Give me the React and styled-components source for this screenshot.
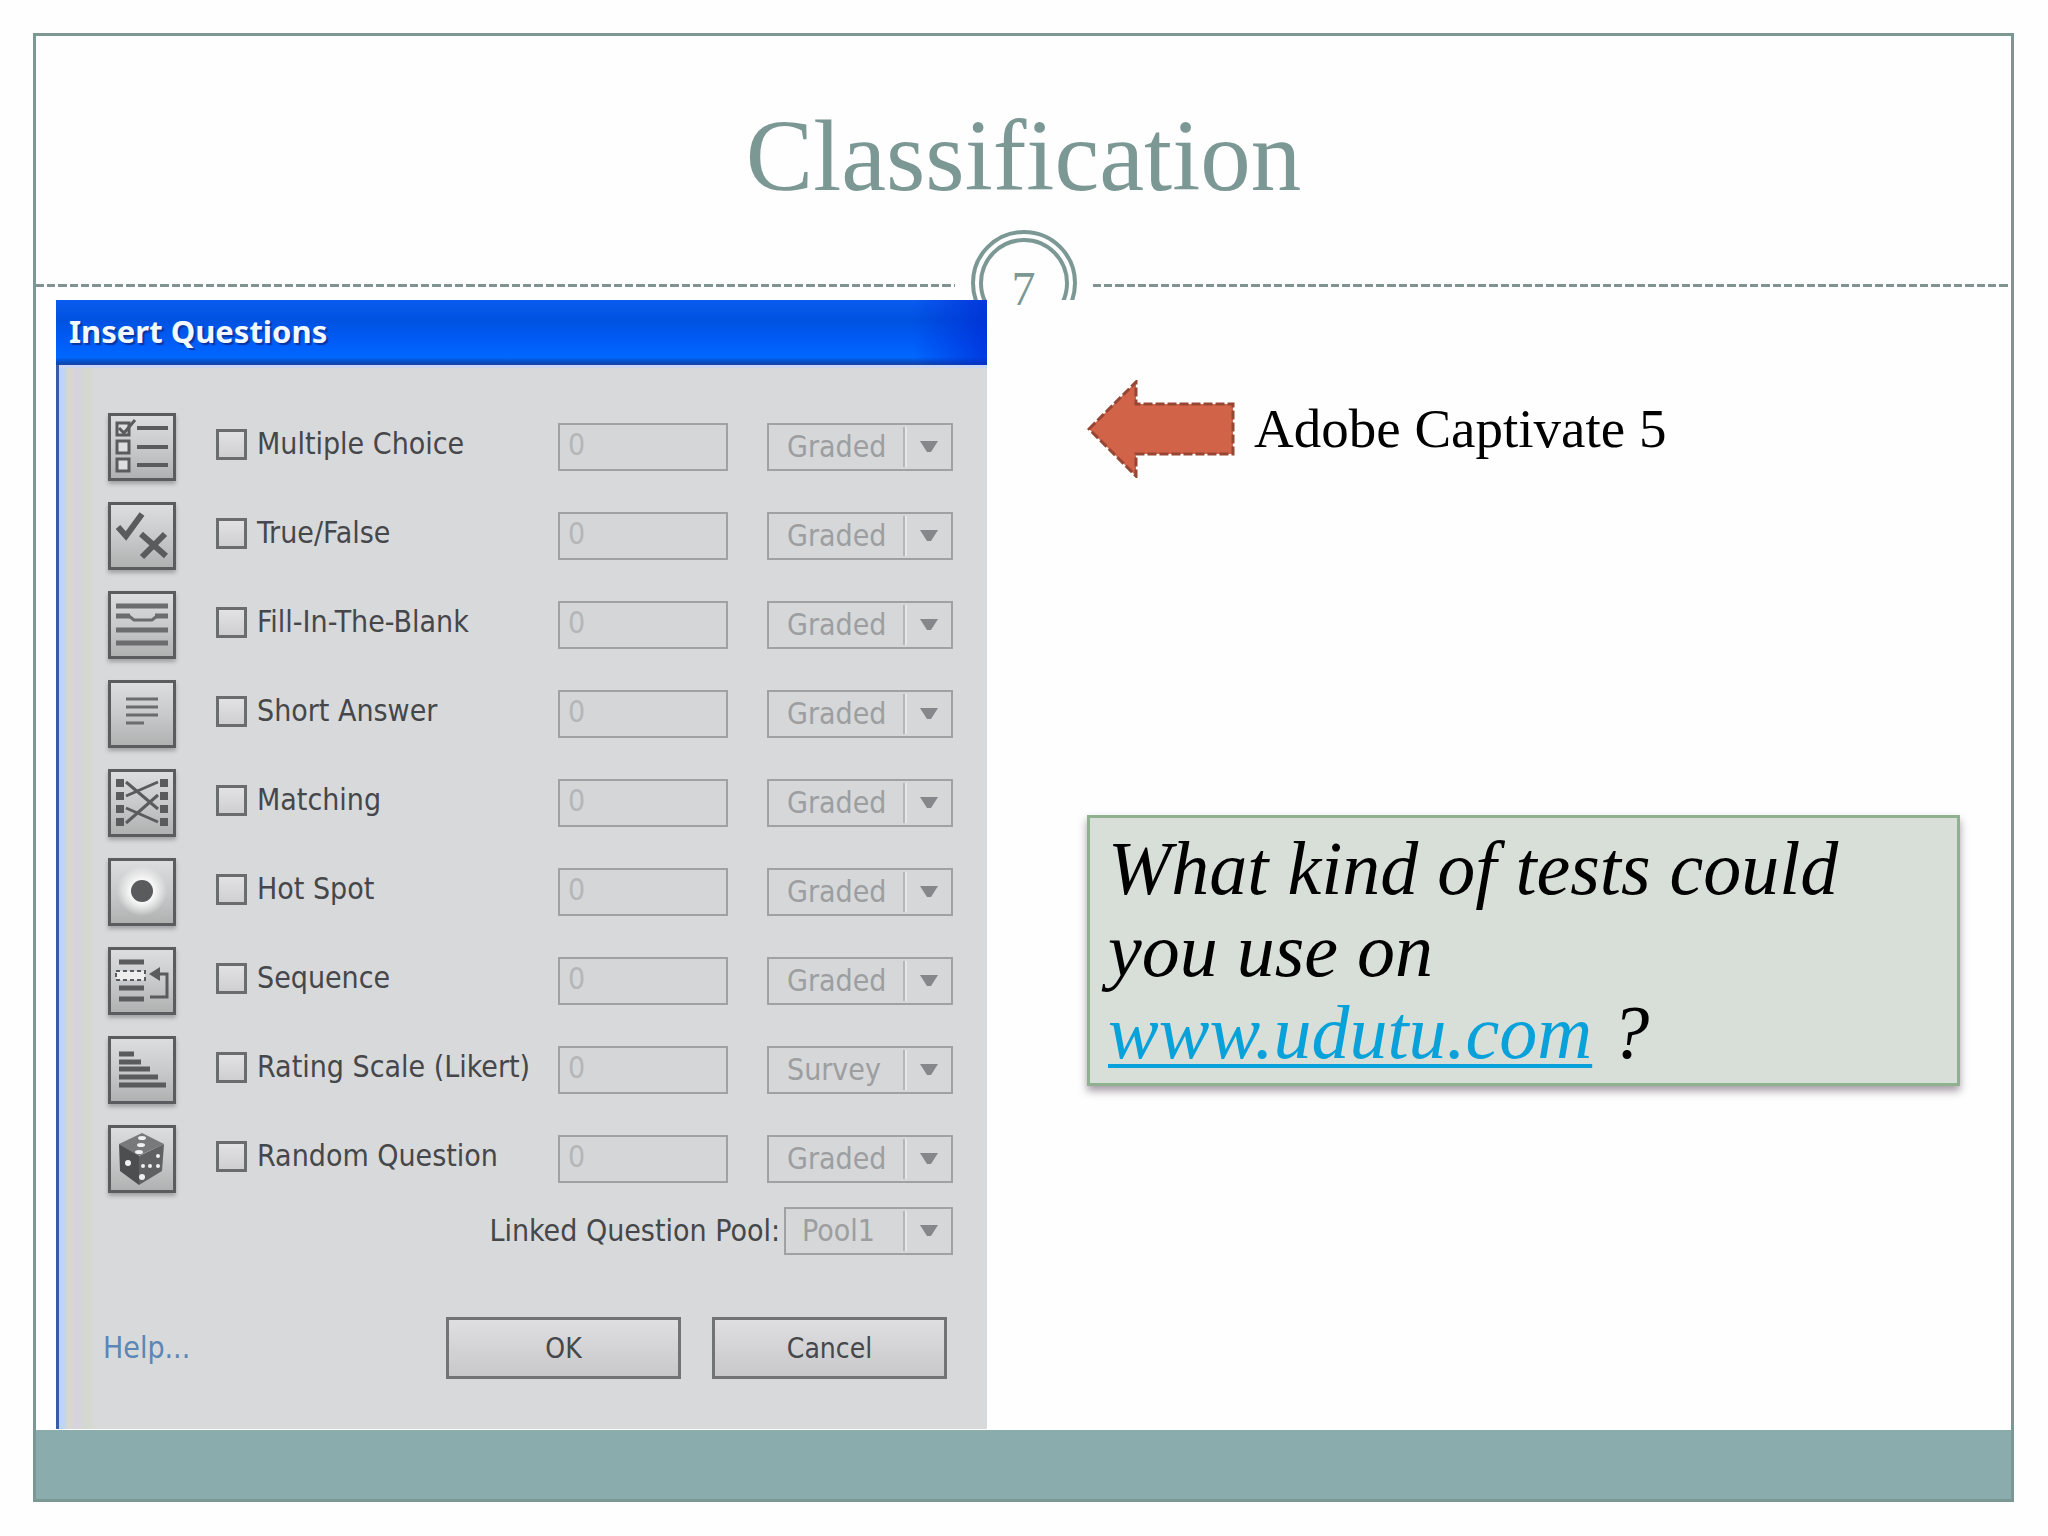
import React from "react";
import styled, { createGlobalStyle } from "styled-components";

const GlobalStyle = createGlobalStyle`
  * {
    box-sizing: border-box;
  }
  body {
    margin: 0;
    background: #fefefe;
    font-family: "Liberation Serif", serif;
  }
`;

const uiFont = `"DejaVu Sans Condensed", "DejaVu Sans", sans-serif`;

const Slide = styled.main`
  display: flex;
  flex-direction: column;
  min-height: calc(100vh - 67px);
  margin: 33px 34px 34px 33px;
  border: 3px solid #7c9895;
`;

const SlideTitle = styled.h1`
  margin: 0;
  padding: 65px 0 19px;
  color: #7c9895;
  font-size: 101px;
  font-weight: 400;
  line-height: 110px;
  text-align: center;
`;

const Divider = styled.div`
  display: flex;
  gap: 16px;
`;

const DashedLine = styled.div`
  flex: 1;
  height: 3px;
  margin-top: 54px;
  background: repeating-linear-gradient(
    to right,
    #7f9492 0 8px,
    transparent 8px 11px,
    #7f9492 11px 19px,
    transparent 19px 22px,
    #7f9492 22px 31px,
    transparent 31px 34px
  );
`;

const PageBadge = styled.div`
  position: relative;
  width: 106px;
  height: 70px;

  svg {
    display: block;
  }
`;

const PageNumber = styled.span`
  position: absolute;
  inset: 35px 0 auto;
  z-index: 1;
  color: #7c9895;
  font-size: 48px;
  line-height: 48px;
  text-align: center;
`;

const SlideBody = styled.div`
  flex: 1;
  display: grid;
  grid-template-columns: minmax(0, 931fr) minmax(0, 1024fr);
  padding: 0 0 1px 20px;
`;

const FooterBand = styled.footer`
  height: 69px;
  background: #8bacad;
`;

const Dialog = styled.form`
  border-left: 3px solid #3a5ca8;
  background: linear-gradient(
      to right,
      #bcd5f5 0 4px,
      #dad8cb 10px,
      #d6d2df 18px,
      #d3d9cd 28px,
      rgba(216, 217, 219, 0) 38px
    ),
    #d8d9db;
  color: #45474a;
  font-family: ${uiFont};
  font-size: 30px;
  line-height: 36px;
`;

const TitleBar = styled.h2`
  margin: 0 0 0 -3px;
  padding: 13px 13px 16px;
  background: linear-gradient(to right, rgba(0, 40, 210, 0) 92%, rgba(0, 40, 210, 0.7)),
    linear-gradient(#0a5cf0, #0052e0 30%, #005cf8 65%, #0068ff 88%, #0a48b8 97%, #1c48a0);
  color: #f2f8ff;
  font-family: "Noto Sans", sans-serif;
  font-size: 31px;
  font-weight: 700;
  line-height: 36px;
  text-shadow: 2px 2px 1px #0a35a0;
`;

const DialogBody = styled.div`
  padding: 45px 34px 50px 49px;
  border-top: 3px solid #c9d6f3;
`;

const Questions = styled.ul`
  display: flex;
  flex-direction: column;
  gap: 21px;
  margin: 0 0 14px;
  padding: 0;
  list-style: none;
`;

const QuestionRow = styled.li`
  display: flex;
  align-items: center;
`;

const IconTile = styled.svg`
  width: 68px;
  height: 68px;
  margin-right: 40px;
  border: 3px solid #5a5c5d;
  background: linear-gradient(#dcddde, #c9cacb 50%, #b0b2b2);
  box-shadow: 0 3px 4px rgba(0, 0, 0, 0.25);
`;

const CheckLabel = styled.label`
  flex: 1;
  display: flex;
  align-items: center;
  gap: 10px;
  padding-bottom: 6px;
  white-space: nowrap;
`;

const Checkbox = styled.input`
  appearance: none;
  width: 31px;
  height: 31px;
  margin: 0;
  border: 3px solid #6a6c6d;
  background: linear-gradient(#e2e2e4, #cfcfd2);
`;

const CountInput = styled.input`
  width: 170px;
  height: 48px;
  margin-right: 39px;
  padding: 0 8px 6px;
  border: 2px solid #9fa1a3;
  border-radius: 0;
  background: #d5d6d8;
  color: #b4b6b8;
  font: inherit;
`;

const SelectBox = styled.div`
  position: relative;
  width: ${(props) => props.$width}px;

  svg {
    position: absolute;
    top: 4px;
    right: 2px;
    pointer-events: none;
  }
`;

const Select = styled.select`
  display: block;
  appearance: none;
  width: 100%;
  height: 48px;
  padding: 0 50px 0 ${(props) => props.$indent}px;
  border: 2px solid #9fa1a3;
  border-radius: 0;
  background: #d6d7d9;
  color: #9c9ea0;
  font: inherit;
  opacity: 1;
`;

const PoolRow = styled.div`
  display: flex;
  justify-content: flex-end;
  align-items: center;
  gap: 4px;
  margin-bottom: 62px;
`;

const Actions = styled.div`
  display: flex;
  align-items: center;
  gap: 31px;
  padding-right: 6px;
`;

const HelpLink = styled.a`
  margin: 0 auto 0 -5px;
  color: #5c86b4;
  text-decoration: none;
`;

const DialogButton = styled.button`
  width: 235px;
  height: 62px;
  padding: 0;
  border: 3px solid #717375;
  background: linear-gradient(#dfdfe1, #c8c8ca);
  color: inherit;
  font-family: inherit;
  font-size: 28px;
`;

const Notes = styled.section`
  padding: 80px 51px 0 100px;
`;

const ToolName = styled.div`
  display: flex;
  align-items: center;
  gap: 19px;
  margin-bottom: 337px;
  color: #000;
  font-size: 55px;
  line-height: 60px;
`;

const Callout = styled.p`
  margin: 0;
  padding: 9px 18px 10px;
  border: 3px solid #8fb18f;
  background: #d7dfd8;
  box-shadow: 0 5px 8px rgba(60, 40, 60, 0.45);
  color: #000;
  font-size: 76px;
  font-style: italic;
  line-height: 82px;

  a {
    color: #08a1d9;
    text-decoration-thickness: 4px;
    text-underline-offset: 6px;
    text-decoration-skip-ink: none;
  }
`;

const ink = "#595b5c";

const MultipleChoiceIcon = () => (
  <>
    <g fill="#dedede" stroke={ink} strokeWidth="3">
      <rect x="6" y="7" width="12" height="12" />
      <rect x="6" y="25" width="12" height="12" />
      <rect x="6" y="43" width="12" height="12" />
    </g>
    <path d="M8 12l5 5 11-13" fill="none" stroke={ink} strokeWidth="3" />
    <path d="M26 12h31M26 31h31M26 49h31" stroke={ink} strokeWidth="4" />
  </>
);

const TrueFalseIcon = () => (
  <g fill="none" stroke={ink} strokeWidth="6">
    <path d="M7 22l8 9 16-22" />
    <path d="M30 29l25 22M54 29L31 52" />
  </g>
);

const FillBlankIcon = () => (
  <g fill="none" stroke="#6a6c6d">
    <path d="M5 12h52M5 36h52M5 49h52" strokeWidth="5" />
    <path d="M5 22h14M44 22h13" strokeWidth="5" />
    <path d="M18 22l5 4h18l5-4" strokeWidth="3" />
  </g>
);

const ShortAnswerIcon = () => (
  <path d="M15 16h32M15 24h32M15 32h32M15 40h18" stroke="#6a6c6d" strokeWidth="3" />
);

const MatchingIcon = () => (
  <>
    {[11, 24, 37, 50].map((y) => (
      <path key={y} d={`M5 ${y}h8M49 ${y}h8`} stroke={ink} strokeWidth="8" />
    ))}
    <path
      d="M15 10L47 37M15 24L47 10M15 36L47 50M15 51L47 23"
      stroke={ink}
      strokeWidth="3"
    />
  </>
);

const HotSpotIcon = () => (
  <>
    <defs>
      <radialGradient id="glow">
        <stop offset="50%" stopColor="#f6f6f6" />
        <stop offset="100%" stopColor="#f6f6f6" stopOpacity="0" />
      </radialGradient>
    </defs>
    <circle cx="31" cy="30" r="25" fill="url(#glow)" />
    <circle cx="31" cy="30" r="11" fill={ink} />
  </>
);

const SequenceIcon = () => (
  <>
    <path d="M8 12h25M8 38h25M8 49h25" stroke={ink} strokeWidth="5" />
    <rect x="5" y="21" width="29" height="9" fill="#eee" stroke={ink} strokeWidth="2" strokeDasharray="4 3" />
    <path d="M39 47h17V24H46" fill="none" stroke={ink} strokeWidth="3" />
    <path d="M38 24l11-7v14z" fill={ink} />
  </>
);

const RatingIcon = () => (
  <path d="M8 15h15M8 23h22M8 30h31M8 38h39M8 46h47" stroke={ink} strokeWidth="5" />
);

const DiceIcon = () => (
  <>
    <path d="M31 5L8 16l19 12 26-12z" fill="#77797a" />
    <path d="M8 16l20 12v29L9 43z" fill="#4c4e4f" />
    <path d="M53 16L28 28v29l23-14z" fill="#5f6162" />
    <g fill="#f0f0f0">
      <ellipse cx="31" cy="10" rx="4" ry="2" />
      <ellipse cx="30" cy="17" rx="4" ry="2" />
      <ellipse cx="28" cy="24" rx="4" ry="2" />
      <circle cx="17" cy="35" r="3" />
      <circle cx="47" cy="28" r="2" />
      <circle cx="32" cy="38" r="2" />
      <circle cx="39" cy="38" r="2" />
      <circle cx="47" cy="38" r="2" />
      <circle cx="31" cy="49" r="3" />
    </g>
  </>
);

const questions = [
  { id: "multiple-choice", label: "Multiple Choice", type: "Graded", Icon: MultipleChoiceIcon },
  { id: "true-false", label: "True/False", type: "Graded", Icon: TrueFalseIcon },
  { id: "fill-blank", label: "Fill-In-The-Blank", type: "Graded", Icon: FillBlankIcon },
  { id: "short-answer", label: "Short Answer", type: "Graded", Icon: ShortAnswerIcon },
  { id: "matching", label: "Matching", type: "Graded", Icon: MatchingIcon },
  { id: "hot-spot", label: "Hot Spot", type: "Graded", Icon: HotSpotIcon },
  { id: "sequence", label: "Sequence", type: "Graded", Icon: SequenceIcon },
  { id: "rating", label: "Rating Scale (Likert)", type: "Survey", Icon: RatingIcon },
  { id: "random", label: "Random Question", type: "Graded", Icon: DiceIcon },
];

const Dropdown = ({ width = 186, indent = 18, option, ...rest }) => (
  <SelectBox $width={width}>
    <Select $indent={indent} disabled {...rest}>
      <option>{option}</option>
    </Select>
    <svg width="48" height="40" aria-hidden="true">
      <path d="M1 0v40" stroke="#b4b6b8" strokeWidth="2" />
      <path d="M3 0v40" stroke="#e6e7e9" strokeWidth="2" />
      <path d="M17 14h18l-7 11h-4z" fill="#85878a" />
    </svg>
  </SelectBox>
);

const InsertQuestions = () => (
  <Dialog onSubmit={(e) => e.preventDefault()}>
    <TitleBar>Insert Questions</TitleBar>
    <DialogBody>
      <Questions>
        {questions.map(({ id, label, type, Icon }) => (
          <QuestionRow key={id}>
            <IconTile viewBox="0 0 62 62" aria-hidden="true">
              <Icon />
            </IconTile>
            <CheckLabel htmlFor={id}>
              <Checkbox type="checkbox" id={id} />
              {label}
            </CheckLabel>
            <CountInput type="text" defaultValue="0" disabled aria-label={`${label} count`} />
            <Dropdown option={type} aria-label={`${label} type`} />
          </QuestionRow>
        ))}
      </Questions>
      <PoolRow>
        <label htmlFor="pool">Linked Question Pool:</label>
        <Dropdown id="pool" width={169} indent={16} option="Pool1" />
      </PoolRow>
      <Actions>
        <HelpLink href="#help">Help...</HelpLink>
        <DialogButton type="submit">OK</DialogButton>
        <DialogButton type="button">Cancel</DialogButton>
      </Actions>
    </DialogBody>
  </Dialog>
);

const App = () => {
  return (
    <>
      <GlobalStyle />
      <Slide>
        <SlideTitle>Classification</SlideTitle>
        <Divider>
          <DashedLine />
          <PageBadge>
            <svg width="106" height="70" aria-hidden="true">
              <g fill="none" stroke="#7c9895" strokeWidth="4">
                <circle cx="53" cy="53" r="51" />
                <circle cx="53" cy="53" r="43" />
              </g>
            </svg>
            <PageNumber>7</PageNumber>
          </PageBadge>
          <DashedLine />
        </Divider>
        <SlideBody>
          <InsertQuestions />
          <Notes>
            <ToolName>
              <svg width="148" height="98" aria-hidden="true">
                <path
                  d="M2 49L49 2v22h97v50H49v22z"
                  fill="#d16349"
                  stroke="#984634"
                  strokeWidth="3"
                  strokeDasharray="9 3"
                />
              </svg>
              Adobe Captivate 5
            </ToolName>
            <Callout>
              What kind of tests could
              <br />
              you use on
              <br />
              <a href="http://www.udutu.com">www.udutu.com</a> ?
            </Callout>
          </Notes>
        </SlideBody>
        <FooterBand />
      </Slide>
    </>
  );
};

export default App;
